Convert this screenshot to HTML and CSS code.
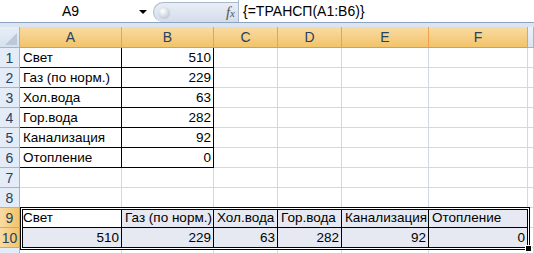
FILE: index.html
```html
<!DOCTYPE html>
<html lang="ru">
<head>
    <meta charset="UTF-8">
    <title>ТРАНСП</title>
    <link rel="stylesheet" href="styles.css">
</head>
<body>
    <div class="formula-bar">
        <div class="name-box">
            <span class="name">A9</span>
            <span class="arrow"></span>
        </div>
        <div class="splitter">
            <span class="knob"></span>
            <span class="fx">f<small>x</small></span>
        </div>
        <div class="formula">{=ТРАНСП(A1:B6)}</div>
    </div>

    <div class="sheet">
        <div class="corner"><span class="tri"></span></div>
        <div class="col-head sel">A</div>
        <div class="col-head sel">B</div>
        <div class="col-head sel">C</div>
        <div class="col-head sel">D</div>
        <div class="col-head sel">E</div>
        <div class="col-head sel">F</div>
        <div class="col-head"></div>

        <div class="row-head">1</div>
        <div class="cell b">Свет</div><div class="cell b num">510</div>
        <div class="cell"></div><div class="cell"></div><div class="cell"></div><div class="cell"></div><div class="cell"></div>

        <div class="row-head">2</div>
        <div class="cell b">Газ (по норм.)</div><div class="cell b num">229</div>
        <div class="cell"></div><div class="cell"></div><div class="cell"></div><div class="cell"></div><div class="cell"></div>

        <div class="row-head">3</div>
        <div class="cell b">Хол.вода</div><div class="cell b num">63</div>
        <div class="cell"></div><div class="cell"></div><div class="cell"></div><div class="cell"></div><div class="cell"></div>

        <div class="row-head">4</div>
        <div class="cell b">Гор.вода</div><div class="cell b num">282</div>
        <div class="cell"></div><div class="cell"></div><div class="cell"></div><div class="cell"></div><div class="cell"></div>

        <div class="row-head">5</div>
        <div class="cell b">Канализация</div><div class="cell b num">92</div>
        <div class="cell"></div><div class="cell"></div><div class="cell"></div><div class="cell"></div><div class="cell"></div>

        <div class="row-head">6</div>
        <div class="cell b">Отопление</div><div class="cell b num">0</div>
        <div class="cell"></div><div class="cell"></div><div class="cell"></div><div class="cell"></div><div class="cell"></div>

        <div class="row-head">7</div>
        <div class="cell"></div><div class="cell"></div><div class="cell"></div><div class="cell"></div><div class="cell"></div><div class="cell"></div><div class="cell"></div>

        <div class="row-head">8</div>
        <div class="cell"></div><div class="cell"></div><div class="cell"></div><div class="cell"></div><div class="cell"></div><div class="cell"></div><div class="cell"></div>

        <div class="row-head sel">9</div>
        <div class="cell b active">Свет</div>
        <div class="cell b hl">Газ (по норм.)</div>
        <div class="cell b hl">Хол.вода</div>
        <div class="cell b hl">Гор.вода</div>
        <div class="cell b hl">Канализация</div>
        <div class="cell b hl">Отопление</div>
        <div class="cell"></div>

        <div class="row-head sel">10</div>
        <div class="cell b hl num">510</div>
        <div class="cell b hl num">229</div>
        <div class="cell b hl num">63</div>
        <div class="cell b hl num">282</div>
        <div class="cell b hl num">92</div>
        <div class="cell b hl num">0</div>
        <div class="cell"></div>

        <div class="row-head last"></div>
        <div class="cell last"></div><div class="cell last"></div><div class="cell last"></div><div class="cell last"></div><div class="cell last"></div><div class="cell last"></div><div class="cell last"></div>

        <div class="selection"><span class="handle"></span></div>
    </div>
</body>
</html>
```

FILE: styles.css
```css
body {
    margin: 0;
    font-family: 'Liberation Sans', Arial, sans-serif;
    font-size: 13.5px;
    color: #000;
    background: #fff;
    overflow: hidden;
}

/* formula bar */
.formula-bar {
    display: flex;
    height: 22px;
    border-bottom: 1px solid #8ea3bf;
    background: #fff;
}
.name-box {
    width: 150px;
    display: flex;
    align-items: center;
}
.name {
    flex: 1;
    text-align: center;
    font-size: 14px;
    padding-left: 2px;
}
.arrow {
    width: 0;
    height: 0;
    border-left: 4px solid transparent;
    border-right: 4px solid transparent;
    border-top: 4px solid #000;
    margin-right: 3px;
    margin-top: 1px;
}
.splitter {
    width: 84px;
    display: flex;
    align-items: center;
    justify-content: space-between;
    margin-top: 2px;
    margin-left: 3px;
    border-radius: 10px 0 0 10px;
    background: linear-gradient(#e9eef6, #d3ddeb);
    border: 1px solid #a9b8cd;
    border-right: none;
    border-bottom: none;
}
.knob {
    width: 12px;
    height: 12px;
    border-radius: 50%;
    margin-left: 4px;
    background: radial-gradient(circle at 40% 35%, #fff, #c3ccd8 70%, #9aa7b8);
}
.fx {
    font-family: 'Liberation Serif', serif;
    font-style: italic;
    font-size: 15px;
    color: #555;
    margin-right: 3px;
}
.fx small {
    font-size: 11px;
}
.formula {
    flex: 1;
    display: flex;
    align-items: center;
    padding-left: 4px;
    font-size: 14px;
    border-left: 1px solid #a9b8cd;
}

/* sheet */
.sheet {
    display: grid;
    grid-template-columns: 20px 102px 92px 64px 64px 87px 99px 1fr;
    grid-template-rows: 21px repeat(10, 20px) 5px;
    border-top: 4px solid #dbe5f1;
    position: relative;
}
.corner {
    background: linear-gradient(#e7eef8, #d6e1ef);
    border-right: 1px solid #9eb6ce;
    border-bottom: 1px solid #9eb6ce;
    position: relative;
}
.tri {
    position: absolute;
    right: 2px;
    bottom: 2px;
    width: 0;
    height: 0;
    border-left: 12px solid transparent;
    border-bottom: 12px solid #bcc8d8;
}
.col-head {
    display: flex;
    align-items: center;
    justify-content: center;
    font-size: 14px;
    color: #27415f;
    background: linear-gradient(#eaf1fa, #d9e4f2);
    border-right: 1px solid #9eb6ce;
    border-bottom: 1px solid #9eb6ce;
}
.col-head.sel {
    background: linear-gradient(#f9dba3, #f2c46a);
    border-right: 1px solid #f1a04a;
    border-bottom: 1px solid #f29536;
}
.row-head {
    display: flex;
    align-items: center;
    justify-content: center;
    font-size: 14px;
    color: #27415f;
    background: #e4ecf7;
    border-right: 1px solid #9eb6ce;
    border-bottom: 1px solid #9eb6ce;
}
.row-head.sel {
    background: linear-gradient(90deg, #f9dba3, #f2c46a);
    border-right: 1px solid #f29536;
    border-bottom: 1px solid #f1a04a;
}
.cell {
    display: flex;
    align-items: flex-end;
    padding: 0 2px 2px 3px;
    white-space: nowrap;
    border-right: 1px solid #d0d7e5;
    border-bottom: 1px solid #d0d7e5;
}
.cell.b {
    border-right-color: #000;
    border-bottom-color: #000;
}
.cell.num {
    justify-content: flex-end;
}
.cell.hl {
    background: #e6e9f1;
}
.last {
    border-bottom: none;
}

/* selection outline A9:F10, laid over the cells */
.selection {
    grid-row: 10 / 12;
    grid-column: 2 / 8;
    position: absolute;
    top: -1px;
    left: 0;
    right: -2px;
    bottom: -2px;
    border: 1px solid #000;
    box-shadow: inset 0 0 0 1px #fff, inset 0 0 0 2px #000;
    pointer-events: none;
}
.handle {
    position: absolute;
    right: -3px;
    bottom: -3px;
    width: 5px;
    height: 5px;
    background: #000;
    border: 1px solid #fff;
}
```
